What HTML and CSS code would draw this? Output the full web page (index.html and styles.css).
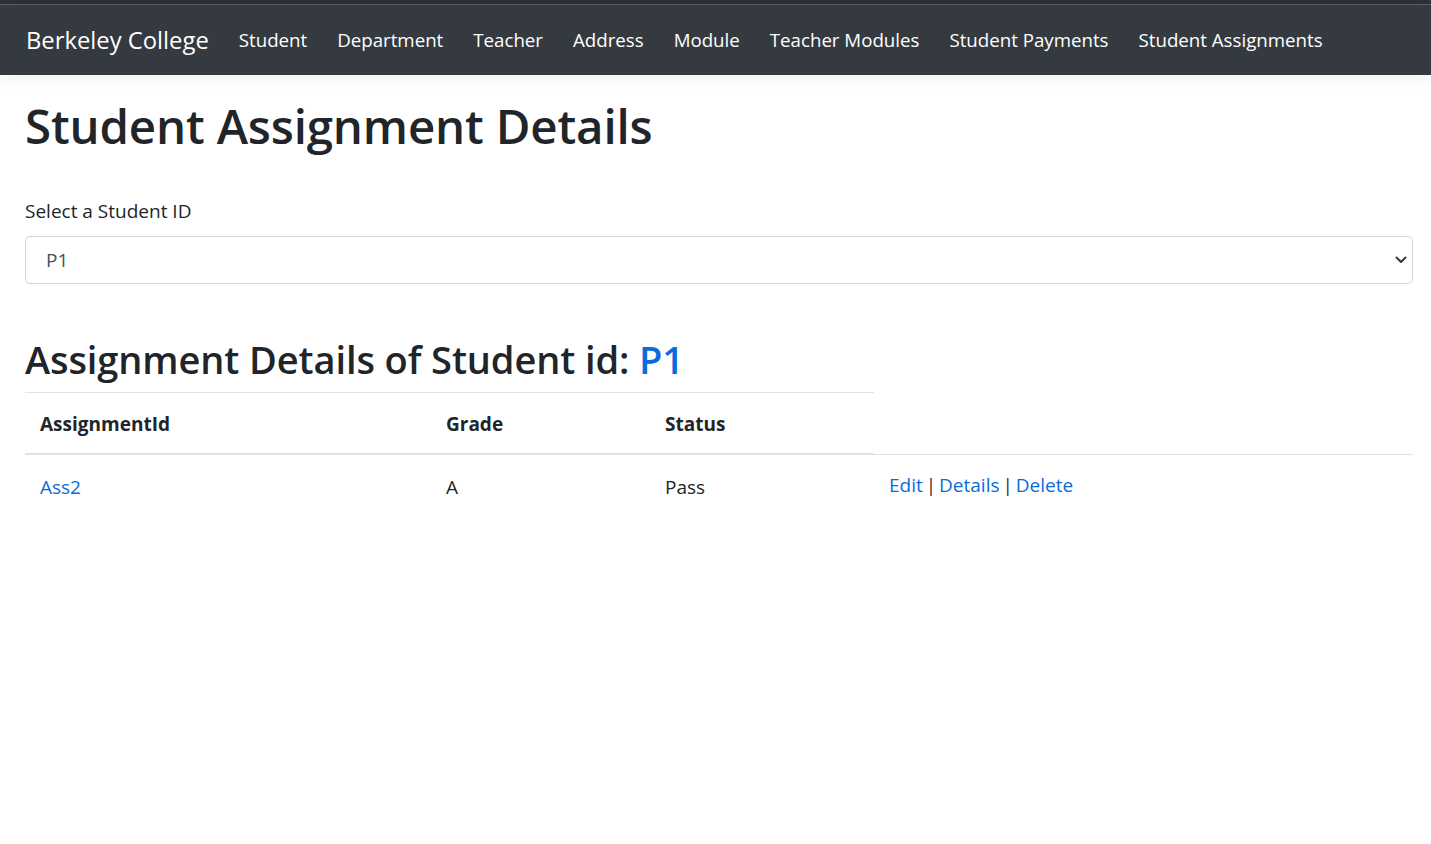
FILE: index.html
```html
<!DOCTYPE html>
<html lang="en">
<head>
<meta charset="utf-8">
<title>Student Assignment Details - Berkeley College</title>
<link rel="stylesheet" href="styles.css">
</head>
<body>
<div class="chrome"></div>
<header class="navbar">
  <a class="brand" href="#">Berkeley College</a>
  <nav class="nav">
    <a class="nav-link" href="#">Student</a>
    <a class="nav-link" href="#">Department</a>
    <a class="nav-link" href="#">Teacher</a>
    <a class="nav-link" href="#">Address</a>
    <a class="nav-link" href="#">Module</a>
    <a class="nav-link" href="#">Teacher Modules</a>
    <a class="nav-link" href="#">Student Payments</a>
    <a class="nav-link" href="#">Student Assignments</a>
  </nav>
</header>
<main class="main">
  <h1 class="title">Student Assignment Details</h1>
  <div class="form-group">
    <label class="label" for="sid">Select a Student ID</label>
    <div class="select-wrap">
      <select id="sid" class="select">
        <option>P1</option>
      </select>
      <svg class="caret" width="12" height="8" viewBox="0 0 12 8" aria-hidden="true"><path d="M1.5 1.5 L6 6 L10.5 1.5" fill="none" stroke="#343a40" stroke-width="2" stroke-linecap="round" stroke-linejoin="round"/></svg>
    </div>
  </div>
  <h2 class="subtitle">Assignment Details of Student id: <span class="accent">P1</span></h2>
  <table class="table">
    <colgroup>
      <col class="c1"><col class="c2"><col class="c3"><col class="c4">
    </colgroup>
    <thead>
      <tr><th>AssignmentId</th><th>Grade</th><th>Status</th></tr>
    </thead>
    <tbody>
      <tr>
        <td><a href="#" class="link">Ass2</a></td>
        <td>A</td>
        <td>Pass</td>
        <td class="actions"><a href="#" class="link">Edit</a> <span class="sep">|</span> <a href="#" class="link">Details</a> <span class="sep">|</span> <a href="#" class="link">Delete</a></td>
      </tr>
    </tbody>
  </table>
</main>
</body>
</html>
```
FILE: styles.css
```css
html, body {
  margin: 0;
  padding: 0;
  background: #fff;
}
body {
  font-family: "Open Sans", "Noto Sans", sans-serif;
  font-size: 19px;
  line-height: 30px;
  color: #212529;
}
.chrome {
  height: 4px;
  background: #2f3134;
  border-bottom: 1px solid #5c5f63;
}
.navbar {
  height: 70px;
  background: #343a40;
  display: flex;
  align-items: center;
  padding-left: 26px;
  box-shadow: 0 5px 15px rgba(0, 0, 0, 0.05);
  position: relative;
}
.brand {
  color: #fff;
  text-decoration: none;
  font-size: 23.8px;
  line-height: 30px;
  margin-right: 30px;
}
.nav {
  display: flex;
  gap: 30px;
}
.nav-link {
  color: #fff;
  text-decoration: none;
  font-size: 18.7px;
  line-height: 30px;
}
.main {
  padding: 21px 18px 0 25px;
}
.title {
  margin: 0 0 40px;
  font-size: 47.4px;
  line-height: 60px;
  font-weight: 600;
  letter-spacing: -0.15px;
}
.form-group {
  margin-bottom: 51px;
}
.label {
  display: block;
  line-height: 30px;
  margin-bottom: 10px;
}
.select-wrap {
  position: relative;
}
.select {
  display: block;
  width: 100%;
  height: 48px;
  box-sizing: border-box;
  border: 1px solid #ced4da;
  border-radius: 5px;
  background: #fff;
  color: #495057;
  font-family: inherit;
  font-size: 19px;
  padding: 0 40px 0 20px;
  appearance: none;
  -webkit-appearance: none;
}
.caret {
  position: absolute;
  right: 6px;
  top: 20px;
}
.subtitle {
  margin: 0 0 9px;
  font-size: 38px;
  line-height: 48px;
  font-weight: 600;
  letter-spacing: -0.1px;
}
.accent {
  color: #0b6bdc;
}
.table {
  width: 100%;
  border-collapse: collapse;
  table-layout: fixed;
}
.c1 { width: 406px; }
.c2 { width: 219px; }
.c3 { width: 224px; }
.table th,
.table td {
  text-align: left;
  vertical-align: top;
  padding: 15px 15px;
  line-height: 30px;
}
.table th {
  font-weight: 700;
  padding-top: 16px;
  padding-bottom: 14px;
  border-top: 1px solid #dee2e6;
  border-bottom: 2px solid #dee2e6;
}
.table td {
  padding-top: 17px;
  padding-bottom: 13px;
  border-top: 1px solid #dee2e6;
}
.table td.actions {
  padding-top: 15px;
  word-spacing: -2px;
}
.sep {
  color: #3a2a2a;
}
.link {
  color: #0b6bdc;
  text-decoration: none;
}
```
